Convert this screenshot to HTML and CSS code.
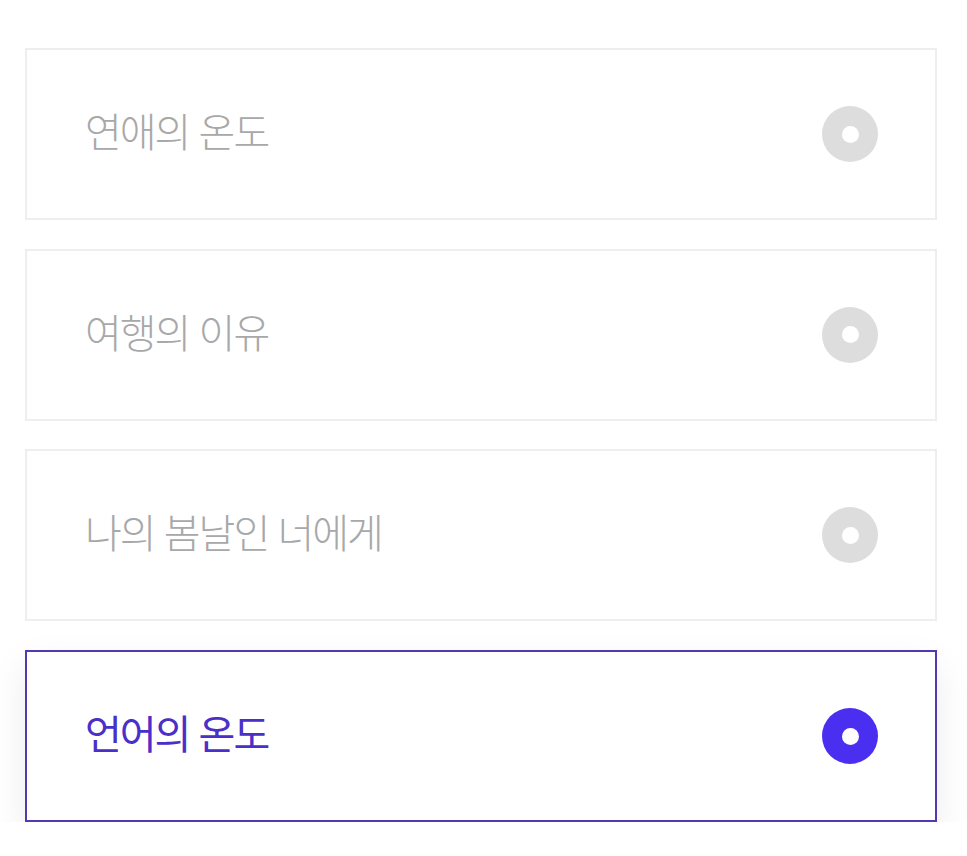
FILE: index.html
```html
<!doctype html>
<html lang="ko">
<head>
  <meta charset="utf-8">
  <title>책 선택</title>
<link rel="stylesheet" href="styles.css">
</head>
<body>
  <ul class="options">
    <li class="option">
      <span class="option-title">연애의 온도</span>
      <span class="radio"></span>
    </li>
    <li class="option">
      <span class="option-title">여행의 이유</span>
      <span class="radio"></span>
    </li>
    <li class="option">
      <span class="option-title">나의 봄날인 너에게</span>
      <span class="radio"></span>
    </li>
    <li class="option selected">
      <span class="option-title">언어의 온도</span>
      <span class="radio"></span>
    </li>
  </ul>
</body>
</html>
```

FILE: styles.css
```css
* {
  box-sizing: border-box;
}

body {
  margin: 0;
  background: #fff;
  font-family: "Noto Sans CJK KR", "Noto Sans", sans-serif;
}

.options {
  list-style-type: none;
  margin: 0;
  padding: 48px 30px 0 25px;
  display: flex;
  flex-direction: column;
  gap: 28.7px;
}

.option {
  height: 172px;
  border: 2px solid #eeeeee;
  background: #fff;
  display: flex;
  align-items: center;
  justify-content: space-between;
  padding: 0 57px 0 58px;
}

.option-title {
  font-size: 40px;
  letter-spacing: -2px;
  color: #a8a8a8;
  font-weight: 300;
  line-height: 1;
  padding-bottom: 8px;
}

.radio {
  width: 56px;
  height: 56px;
  border-radius: 50%;
  background: #dddddd;
  display: flex;
  align-items: center;
  justify-content: center;
}

.radio::after {
  content: "";
  width: 17px;
  height: 17px;
  border-radius: 50%;
  background: #fff;
}

.selected {
  border-color: #5438b0;
  box-shadow: 0 16px 36px rgba(0, 0, 0, 0.08);
}

.selected .option-title {
  color: #4a30c8;
  font-weight: 400;
}

.selected .radio {
  background: #4a2ff0;
}
```
